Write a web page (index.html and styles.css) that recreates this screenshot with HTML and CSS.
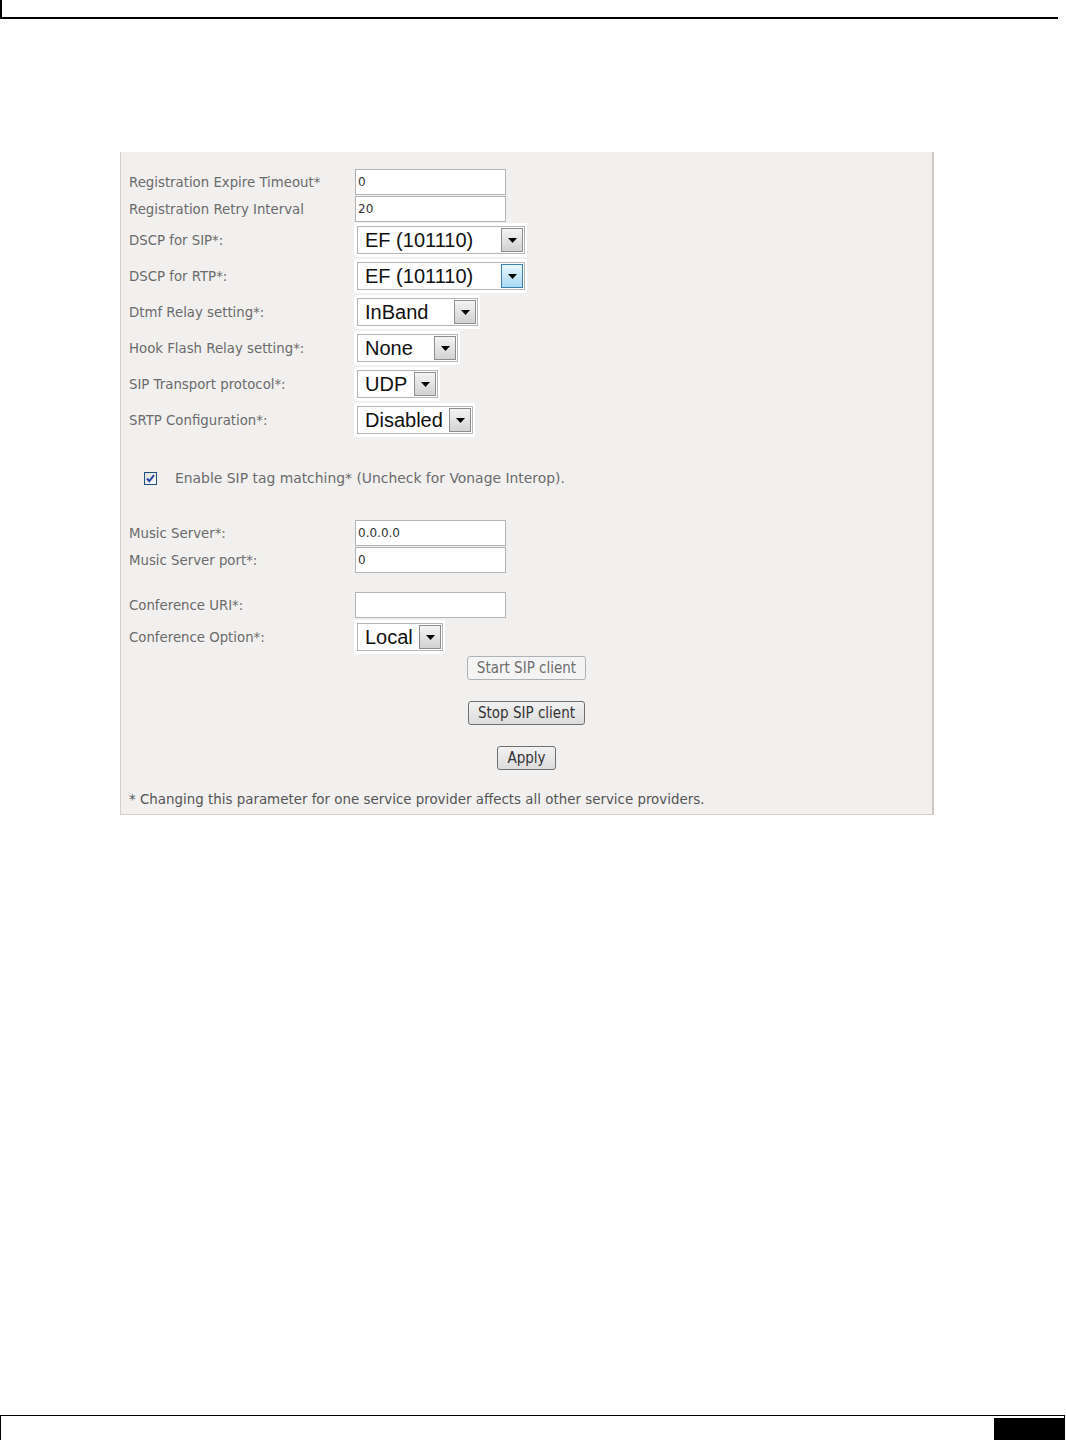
FILE: index.html
```html
<!DOCTYPE html>
<html>
<head>
<title>SIP Advanced Settings</title>
<link rel="stylesheet" href="styles.css">
</head>
<body>
<div class="page">
  <div class="page-top"></div>

  <div class="panel">
    <div class="row text-row">
      <span class="label">Registration Expire Timeout*</span>
      <span class="field">0</span>
    </div>
    <div class="row text-row">
      <span class="label">Registration Retry Interval</span>
      <span class="field">20</span>
    </div>

    <div class="row combo-row">
      <span class="label">DSCP for SIP*:</span>
      <span class="combo-cell">
        <span class="combo w-dscp"><span class="val">EF (101110)</span><span class="drop"><svg width="9" height="5" viewBox="0 0 9 5"><path d="M0 0h9L4.5 5z"/></svg></span></span>
      </span>
    </div>
    <div class="row combo-row">
      <span class="label">DSCP for RTP*:</span>
      <span class="combo-cell">
        <span class="combo w-dscp"><span class="val">EF (101110)</span><span class="drop hot"><svg width="9" height="5" viewBox="0 0 9 5"><path d="M0 0h9L4.5 5z"/></svg></span></span>
      </span>
    </div>
    <div class="row combo-row">
      <span class="label">Dtmf Relay setting*:</span>
      <span class="combo-cell">
        <span class="combo w-dtmf"><span class="val">InBand</span><span class="drop"><svg width="9" height="5" viewBox="0 0 9 5"><path d="M0 0h9L4.5 5z"/></svg></span></span>
      </span>
    </div>
    <div class="row combo-row">
      <span class="label">Hook Flash Relay setting*:</span>
      <span class="combo-cell">
        <span class="combo w-hook"><span class="val">None</span><span class="drop"><svg width="9" height="5" viewBox="0 0 9 5"><path d="M0 0h9L4.5 5z"/></svg></span></span>
      </span>
    </div>
    <div class="row combo-row">
      <span class="label">SIP Transport protocol*:</span>
      <span class="combo-cell">
        <span class="combo w-udp"><span class="val">UDP</span><span class="drop"><svg width="9" height="5" viewBox="0 0 9 5"><path d="M0 0h9L4.5 5z"/></svg></span></span>
      </span>
    </div>
    <div class="row combo-row">
      <span class="label">SRTP Configuration*:</span>
      <span class="combo-cell">
        <span class="combo w-srtp"><span class="val">Disabled</span><span class="drop"><svg width="9" height="5" viewBox="0 0 9 5"><path d="M0 0h9L4.5 5z"/></svg></span></span>
      </span>
    </div>

    <div class="check-row">
      <span class="check"><svg width="11" height="11" viewBox="0 0 11 11"><path d="M2 5.5l2.3 2.6L9 2.2" fill="none" stroke="#2b45a8" stroke-width="2"/></svg></span>
      <span class="check-text">Enable SIP tag matching* (Uncheck for Vonage Interop).</span>
    </div>

    <div class="row text-row">
      <span class="label">Music Server*:</span>
      <span class="field">0.0.0.0</span>
    </div>
    <div class="row text-row">
      <span class="label">Music Server port*:</span>
      <span class="field">0</span>
    </div>

    <div class="row text-row conf-uri">
      <span class="label">Conference URI*:</span>
      <span class="field"></span>
    </div>
    <div class="row combo-row">
      <span class="label">Conference Option*:</span>
      <span class="combo-cell">
        <span class="combo w-local"><span class="val">Local</span><span class="drop"><svg width="9" height="5" viewBox="0 0 9 5"><path d="M0 0h9L4.5 5z"/></svg></span></span>
      </span>
    </div>

    <div class="actions">
      <span class="btn off">Start SIP client</span>
      <span class="btn">Stop SIP client</span>
      <span class="btn">Apply</span>
    </div>

    <p class="note">* Changing this parameter for one service provider affects all other service providers.</p>
  </div>

  <div class="page-bottom">
    <span class="tab"></span>
  </div>
</div>
</body>
</html>
```

FILE: styles.css
```css
body{
    margin:0;
    background:#fff;
}
.page{
    min-height:1440px;
    display:flex;
    flex-direction:column;
}
.page-top{
    width:1056px;
    height:17px;
    border-left:2px solid #000;
    border-bottom:2px solid #000;
}
.page-bottom{
    margin-top:auto;
    height:24px;
    width:1063px;
    border-top:1px solid #000;
    border-left:1px solid #000;
    border-right:1px solid #000;
    display:flex;
    justify-content:flex-end;
}
.page-bottom .tab{
    width:70px;
    margin-top:2px;
    background:#000;
}

.panel{
    margin:133px 0 0 120px;
    padding:17px 0 0 8px;
    box-sizing:border-box;
    width:814px;
    height:663px;
    background:#f1f0ee;
    border-left:1px solid #d3d0cb;
    border-right:2px solid #cdcac5;
    border-bottom:1px solid #d3d0cb;
    font-family:"DejaVu Sans", Verdana, sans-serif;
    font-size:13.3px;
    color:#6b6b6b;
}
.row{
    display:flex;
    align-items:center;
}
.label{
    width:226px;
    flex:none;
    white-space:nowrap;
}
.text-row{
    height:26px;
    margin-bottom:1px;
}
.field{
    width:151px;
    height:26px;
    box-sizing:border-box;
    border:1px solid #b4b4b4;
    background:#fff;
    padding:2px 0 0 2px;
    font-size:12px;
    line-height:20px;
    color:#333;
}
.combo-row{
    height:34px;
    margin-bottom:2px;
}
.combo-row:first-of-type{
    margin-top:1px;
}
.combo-cell{
    display:flex;
    background:#fff;
    padding:3px 2px 3px 3px;
    margin-left:-1px;
}
.combo{
    display:flex;
    align-items:center;
    height:28px;
    box-sizing:border-box;
    border:1px solid #b6b6b6;
    background:#fff;
    padding:1px;
}
.combo .val{
    flex:1;
    padding-left:6px;
    font-family:"Liberation Sans", Arial, sans-serif;
    font-size:20px;
    color:#111;
    white-space:nowrap;
}
.drop{
    width:22px;
    height:24px;
    box-sizing:border-box;
    border:1px solid #8d8d8d;
    background:linear-gradient(#f4f4f4, #d2d2d2);
    display:flex;
    align-items:center;
    justify-content:center;
}
.drop.hot{
    border-color:#3c7fb1;
    background:linear-gradient(#eaf6fd, #a7d9f5);
}
.w-dscp{width:168px;}
.w-dtmf{width:121px;}
.w-hook{width:101px;}
.w-udp{width:81px;}
.w-srtp{width:116px;}
.w-local{width:86px;}

.check-row{
    display:flex;
    align-items:center;
    height:20px;
    margin:31px 0 0 15px;
}
.check{
    width:13px;
    height:13px;
    box-sizing:border-box;
    border:1px solid #1c5180;
    background:linear-gradient(135deg, #dcdcd7, #fff);
    display:flex;
    align-items:center;
    justify-content:center;
}
.check-text{
    margin-left:18px;
    font-size:13.9px;
    white-space:nowrap;
}
.check-row + .text-row{
    margin-top:32px;
}
.conf-uri{
    margin-top:19px;
}
.conf-uri + .combo-row{
    margin-top:2px;
}

.actions{
    display:flex;
    flex-direction:column;
    align-items:center;
    gap:21px;
    margin:2px 0 0 -8px;
}
.btn{
    height:24px;
    box-sizing:border-box;
    padding:0 9px;
    border:1px solid #707070;
    border-radius:3px;
    background:linear-gradient(#f2f2f2, #dcdcdc);
    font-family:"DejaVu Sans Condensed", "DejaVu Sans", sans-serif;
    font-size:15px;
    line-height:22px;
    color:#333;
}
.btn.off{
    border-color:#adb2b5;
    background:#f4f4f4;
    color:#6d6d6d;
}
.note{
    margin:20px 0 0;
    font-family:"DejaVu Sans Condensed", "DejaVu Sans", sans-serif;
    font-size:14.9px;
    color:#555;
    white-space:nowrap;
}
```
